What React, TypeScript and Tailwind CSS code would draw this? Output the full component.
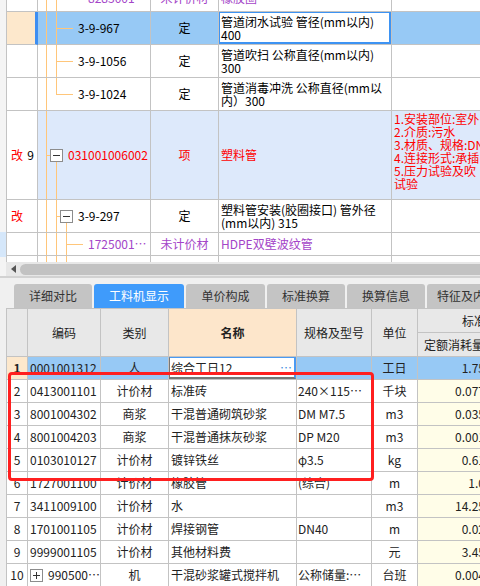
import React from "react";

const G = "border-[#c3c3c3]";
const base = `flex shrink-0 items-center overflow-hidden whitespace-nowrap border-r border-b ${G}`;
const LINE = "absolute bg-[#ffc67a]";

// tree line x offsets inside the code column
const LX = { a: "left-[8px]", b: "left-[18px]", c: "left-[28px]" };
const LS = {
  full: "top-0 bottom-0",
  top: "top-0 h-1/2",
  box: "top-[calc(50%+6px)] bottom-0",
};

type Ln = { x: keyof typeof LX; s: keyof typeof LS };

function Box({ plus }: { plus?: boolean }) {
  return (
    <span className="relative flex h-[13px] w-[13px] shrink-0 items-center justify-center border border-[#8c8c8c] bg-white">
      <span className="h-px w-[7px] bg-[#333]" />
      {plus && <span className="absolute h-[7px] w-px bg-[#333]" />}
    </span>
  );
}

function Tree({ bg = "", lines, hl, children }: { bg?: string; lines: Ln[]; hl?: string; children?: React.ReactNode }) {
  return (
    <div className={`relative w-[113px] ${base} ${bg}`}>
      {lines.map((l, i) => (
        <span key={i} className={`${LINE} w-px ${LX[l.x]} ${LS[l.s]}`} />
      ))}
      {hl && <span className={`${LINE} top-1/2 h-px ${hl}`} />}
      {children}
    </div>
  );
}

function TopGrid() {
  return (
    <div className="-mt-[16px] flex flex-col">
      {/* row 0, scrolled mostly out of view */}
      <div className="flex h-[28px] shrink-0 text-[#a445c8]">
        <div className={`w-[31px] ${base}`} />
        <Tree lines={[{ x: "a", s: "full" }, { x: "b", s: "full" }]}>
          <span className="pl-[50px]">8283001</span>
        </Tree>
        <div className={`w-[68px] justify-center ${base}`}>未计价材</div>
        <div className={`w-[173px] pl-[2px] ${base}`}>橡胶圈</div>
        <div className={`w-[120px] ${base}`} />
      </div>

      {/* row 1, selected */}
      <div className="flex h-[33px] shrink-0">
        <div className="w-[31px] shrink-0 border-b border-b-[#c3c3c3] border-r-[3px] border-r-[#3d8ef2] bg-[#fde8cc]" />
        <Tree bg="bg-[#97c9f5]" lines={[{ x: "a", s: "full" }, { x: "b", s: "full" }]} hl="left-[18px] w-[17px]">
          <span className="relative pl-[40px]">3-9-967</span>
        </Tree>
        <div className={`w-[68px] justify-center bg-[#97c9f5] ${base}`}>定</div>
        <div className={`relative w-[173px] pl-[2px] leading-[13px] ${base}`}>
          <div>
            管道闭水试验 管径(mm以内)
            <br />
            400
          </div>
          <span className="absolute -left-px -top-px right-0 bottom-0 border-2 border-[#3d93f3]" />
        </div>
        <div className={`w-[120px] bg-[#97c9f5] ${base}`} />
      </div>

      {/* row 2 */}
      <div className="flex h-[33px] shrink-0">
        <div className={`w-[31px] ${base}`} />
        <Tree lines={[{ x: "a", s: "full" }, { x: "b", s: "full" }]} hl="left-[18px] w-[17px]">
          <span className="relative pl-[40px]">3-9-1056</span>
        </Tree>
        <div className={`w-[68px] justify-center ${base}`}>定</div>
        <div className={`w-[173px] pl-[2px] leading-[13px] ${base}`}>
          <div>
            管道吹扫 公称直径(mm以内)
            <br />
            300
          </div>
        </div>
        <div className={`w-[120px] ${base}`} />
      </div>

      {/* row 3 */}
      <div className="flex h-[33px] shrink-0">
        <div className={`w-[31px] ${base}`} />
        <Tree lines={[{ x: "a", s: "full" }, { x: "b", s: "top" }]} hl="left-[18px] w-[17px]">
          <span className="relative pl-[40px]">3-9-1024</span>
        </Tree>
        <div className={`w-[68px] justify-center ${base}`}>定</div>
        <div className={`w-[173px] pl-[2px] leading-[13px] ${base}`}>
          <div>
            管道消毒冲洗 公称直径(mm以
            <br />
            内）300
          </div>
        </div>
        <div className={`w-[120px] ${base}`} />
      </div>

      {/* row 4, list item */}
      <div className="flex h-[89px] shrink-0 text-[#f00]">
        <div className={`w-[31px] justify-between pl-[4px] pr-[3px] ${base}`}>
          <span>改</span>
          <span className="text-black">9</span>
        </div>
        <Tree bg="bg-[#dde9fb]" lines={[{ x: "a", s: "full" }, { x: "b", s: "box" }]} hl="left-[8px] w-[4px]">
          <div className="relative flex items-center gap-[5px] pl-[12px]">
            <Box />
            <span>031001006002</span>
          </div>
        </Tree>
        <div className={`w-[68px] justify-center bg-[#dde9fb] ${base}`}>项</div>
        <div className={`w-[173px] bg-[#dde9fb] pl-[2px] ${base}`}>塑料管</div>
        <div className={`w-[120px] flex-col !items-start bg-[#dde9fb] pl-[2px] pt-[1px] leading-[13px] ${base}`}>
          <div>1.安装部位:室外</div>
          <div>2.介质:污水</div>
          <div>3.材质、规格:DN</div>
          <div>4.连接形式:承插</div>
          <div>5.压力试验及吹</div>
          <div>试验</div>
        </div>
      </div>

      {/* row 5 */}
      <div className="flex h-[33px] shrink-0">
        <div className={`w-[31px] pl-[4px] text-[#f00] ${base}`}>改</div>
        <Tree lines={[{ x: "a", s: "full" }, { x: "b", s: "full" }, { x: "c", s: "box" }]} hl="left-[18px] w-[4px]">
          <div className="relative flex items-center gap-[5px] pl-[22px]">
            <Box />
            <span>3-9-297</span>
          </div>
        </Tree>
        <div className={`w-[68px] justify-center ${base}`}>定</div>
        <div className={`w-[173px] pl-[2px] leading-[13px] ${base}`}>
          <div>
            塑料管安装(胶圈接口) 管外径
            <br />
            (mm以内) 315
          </div>
        </div>
        <div className={`w-[120px] ${base}`} />
      </div>

      {/* row 6 */}
      <div className="flex h-[23px] shrink-0 text-[#a445c8]">
        <div className={`w-[31px] ${base}`} />
        <Tree lines={[{ x: "a", s: "full" }, { x: "b", s: "full" }, { x: "c", s: "full" }]} hl="left-[28px] w-[17px]">
          <span className="relative pl-[50px]">1725001…</span>
        </Tree>
        <div className={`w-[68px] justify-center ${base}`}>未计价材</div>
        <div className={`w-[173px] pl-[2px] ${base}`}>HDPE双壁波纹管</div>
        <div className={`w-[120px] ${base}`} />
      </div>

      {/* row 7, cut by the scrollbar */}
      <div className="flex h-[23px] shrink-0 text-[#a445c8]">
        <div className={`w-[31px] ${base}`} />
        <Tree lines={[{ x: "a", s: "full" }, { x: "b", s: "full" }, { x: "c", s: "full" }]} />
        <div className={`w-[68px] justify-center !items-start pt-[3px] ${base}`}>未计价材</div>
        <div className={`w-[173px] !items-start pl-[2px] pt-[3px] ${base}`}>一字管件</div>
        <div className={`w-[120px] ${base}`} />
      </div>
    </div>
  );
}

function Scrollbar() {
  return (
    <div className="flex h-[14px] shrink-0 items-center bg-[#e7e7e7]">
      <div className="flex w-[14px] shrink-0 justify-center">
        <span className="h-0 w-0 border-y-[4px] border-r-[5px] border-y-transparent border-r-[#555]" />
      </div>
      <div className="h-[11px] flex-1 rounded-l-full bg-[#c2c2c2]" />
    </div>
  );
}

const tabs = [
  { t: "详细对比", w: "w-[78px]" },
  { t: "工料机显示", w: "w-[90px]", on: true },
  { t: "单价构成", w: "w-[79px]" },
  { t: "标准换算", w: "w-[78px]" },
  { t: "换算信息", w: "w-[78px]" },
  { t: "特征及内容", w: "w-[80px]" },
];

const rows = [
  { n: "1", code: "0001001312", type: "人", name: "综合工日12", spec: "", unit: "工日", v: "1.75", sel: true },
  { n: "2", code: "0413001101", type: "计价材", name: "标准砖", spec: "240×115…", unit: "千块", v: "0.077" },
  { n: "3", code: "8001004302", type: "商浆", name: "干混普通砌筑砂浆", spec: "DM M7.5", unit: "m3", v: "0.035" },
  { n: "4", code: "8001004203", type: "商浆", name: "干混普通抹灰砂浆", spec: "DP M20", unit: "m3", v: "0.001" },
  { n: "5", code: "0103010127", type: "计价材", name: "镀锌铁丝", spec: "φ3.5", unit: "kg", v: "0.61" },
  { n: "6", code: "1727001100", type: "计价材", name: "橡胶管", spec: "(综合)", unit: "m", v: "1.0" },
  { n: "7", code: "3411009100", type: "计价材", name: "水", spec: "", unit: "m3", v: "14.25" },
  { n: "8", code: "1701001105", type: "计价材", name: "焊接钢管", spec: "DN40", unit: "m", v: "0.02" },
  { n: "9", code: "9999001105", type: "计价材", name: "其他材料费", spec: "", unit: "元", v: "3.45" },
  { n: "10", code: "990500…", type: "机", name: "干混砂浆罐式搅拌机", spec: "公称储量:…", unit: "台班", v: "0.004", plus: true },
];

function Header() {
  const h = `justify-center bg-[#e8e8e8] ${base}`;
  return (
    <div className="flex h-[48px] shrink-0 text-[#222]">
      <div className={`w-[21px] ${h}`} />
      <div className={`w-[73px] ${h}`}>编码</div>
      <div className={`w-[68px] ${h}`}>类别</div>
      <div className={`w-[128px] justify-center bg-[#fde6cb] font-bold ${base}`}>名称</div>
      <div className={`w-[75px] ${h}`}>规格及型号</div>
      <div className={`w-[46px] ${h}`}>单位</div>
      <div className="flex w-[73px] shrink-0 flex-col">
        <div className={`h-[24px] justify-start bg-[#e8e8e8] pl-[44px] ${base} !border-r-0`}>标准</div>
        <div className={`flex-1 justify-center bg-[#e8e8e8] ${base}`}>定额消耗量</div>
      </div>
    </div>
  );
}

function Row({ r }: { r: (typeof rows)[number] }) {
  const blue = r.sel ? "bg-[#97c9f5]" : "";
  return (
    <div className="flex h-[23px] shrink-0 text-[#222]">
      <div className={`w-[21px] justify-center ${r.sel ? "bg-[#fde8cc] font-bold" : ""} ${base}`}>{r.n}</div>
      <div className={`w-[73px] gap-[5px] pl-[2px] ${blue} ${base}`}>
        {r.plus && <Box plus />}
        <span>{r.code}</span>
      </div>
      <div className={`w-[68px] justify-center ${blue} ${base}`}>{r.type}</div>
      <div className={`relative w-[128px] justify-between pl-[2px] ${base}`}>
        <span>{r.name}</span>
        {r.sel && (
          <>
            <span className="pr-[4px] text-[#3b8de0]">…</span>
            <span className="absolute -left-px -top-px right-0 bottom-0 border-2 border-t-[#4a9af2] border-r-[#4a9af2] border-b-[#777] border-l-[#777]" />
          </>
        )}
      </div>
      <div className={`w-[75px] pl-[1px] ${blue} ${base}`}>{r.spec}</div>
      <div className={`w-[46px] justify-center ${blue} ${base}`}>{r.unit}</div>
      <div className={`w-[73px] justify-end pr-[5px] ${r.sel ? "bg-[#97c9f5]" : "bg-[#fffde8]"} ${base}`}>{r.v}</div>
    </div>
  );
}

export default function App() {
  return (
    <div className="relative flex h-[586px] w-[480px] flex-col overflow-hidden bg-[#f0f0f0] font-['Noto_Sans_CJK_SC',sans-serif] text-[12px] text-black">
      <div className="flex h-[276px] shrink-0">
        <div className="flex w-[6px] shrink-0 flex-col bg-[#f4f4f4]">
          <div className="h-[232px]" />
          <div className="h-[25px] bg-[#d5e7fa]" />
        </div>
        <div className="flex min-w-0 flex-1 flex-col">
          <div className={`h-[262px] shrink-0 overflow-hidden border-l ${G} bg-white`}>
            <TopGrid />
          </div>
          <Scrollbar />
        </div>
      </div>

      <div className="h-[8px] shrink-0 border-t-2 border-[#d2d2d2]" />

      <div className="flex h-[24px] shrink-0 gap-[2px] pl-[14px]">
        {tabs.map((t) => (
          <div
            key={t.t}
            className={`flex shrink-0 items-center justify-center whitespace-nowrap rounded-t-[3px] ${t.w} ${
              t.on ? "bg-[#3f9bfb] text-white" : "bg-[#c4c4c4] text-[#333]"
            }`}
          >
            {t.t}
          </div>
        ))}
      </div>

      <div className="flex shrink-0">
        <div className="w-[6px] shrink-0" />
        <div className={`flex flex-col border-l border-t ${G} bg-white`}>
          <Header />
          {rows.map((r) => (
            <Row key={r.n} r={r} />
          ))}
        </div>
      </div>

      <div className="absolute left-[8px] top-[372px] h-[109px] w-[366px] rounded-[4px] border-[3px] border-[#ff1f1f]" />
    </div>
  );
}
